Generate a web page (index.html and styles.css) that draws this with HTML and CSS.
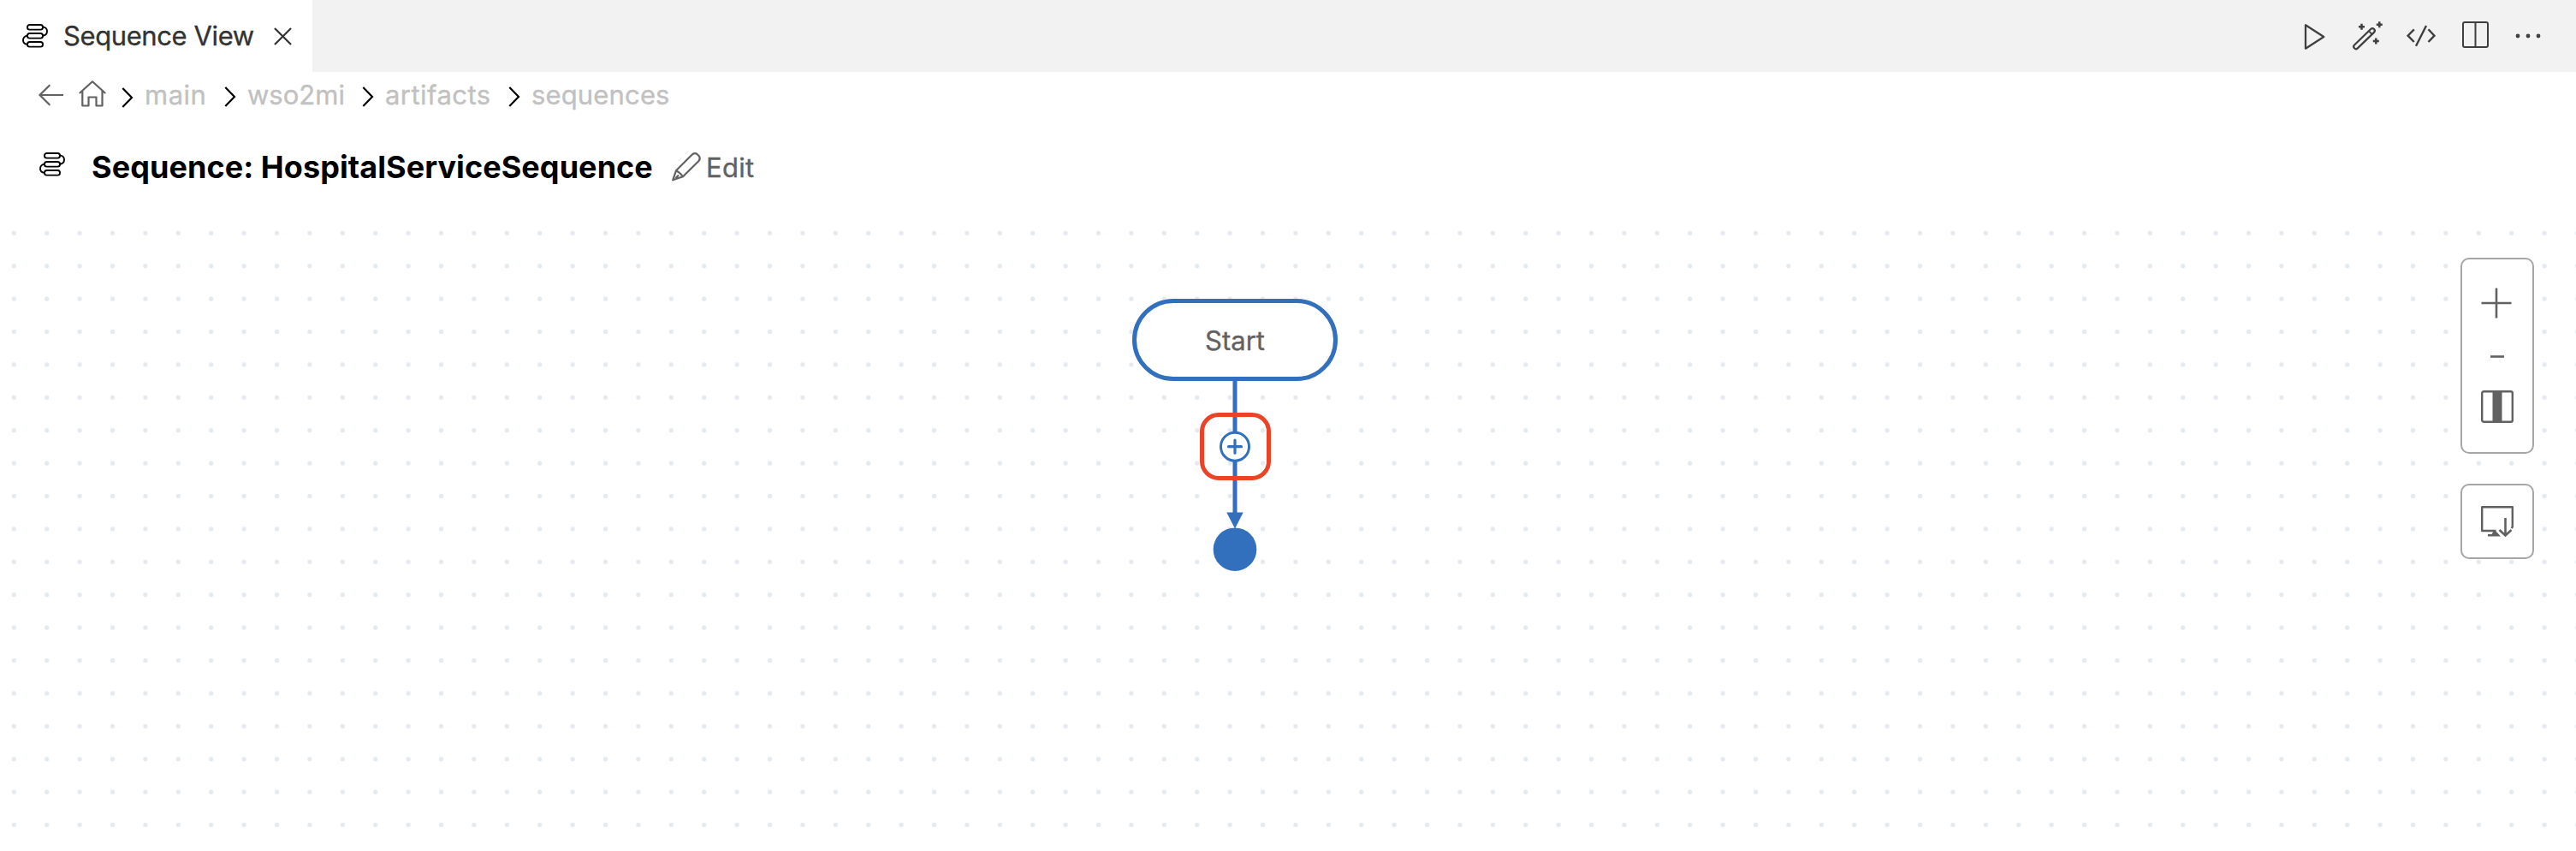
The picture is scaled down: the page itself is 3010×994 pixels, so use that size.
FILE: index.html
```html
<!DOCTYPE html>
<html lang="en">
<head>
<meta charset="utf-8">
<title>Sequence View</title>
<link rel="stylesheet" href="styles.css">
</head>
<body>
<svg class="defs" aria-hidden="true">
  <symbol id="sequence" viewBox="0 0 30 28">
    <g fill="none" stroke="currentColor" stroke-width="1.9">
      <rect x="6" y="1" width="18" height="5.600" rx="2.600"/>
      <rect x="6" y="11" width="18" height="5.600" rx="2.600"/>
      <rect x="6" y="21" width="18" height="5.600" rx="2.600"/>
      <path d="M24 3.400c3 .4 5 2.400 5 5.200s-2 4.900-5 5.200M6 13.600c-3 .6-5 2.700-5 5.400s2 4.600 5 4.900"/>
    </g>
  </symbol>
  <symbol id="chevron" viewBox="0 0 14 24">
    <path d="M1.300 1 12 12 1.300 23" fill="none" stroke="currentColor" stroke-width="2.200"/>
  </symbol>
</svg>

<header class="tabs">
  <div class="tab">
    <svg class="seq-icon"><use href="#sequence"/></svg>
    <span class="tab-label">Sequence View</span>
    <svg class="tab-close" viewBox="0 0 22 22"><path d="M1 1 21 21M21 1 1 21" fill="none" stroke="currentColor" stroke-width="2.300"/></svg>
  </div>
  <div class="actions">
    <svg class="act-run" viewBox="0 0 25 32"><path d="M2 2.300V29.700L23.300 16Z" fill="none" stroke="currentColor" stroke-width="2.300" stroke-linejoin="round"/></svg>
    <svg class="act-wand" viewBox="0 0 34 33"><g fill="none" stroke="currentColor">
      <rect x="-16" y="-2.700" width="32" height="5.400" rx="2.700" stroke-width="2.200" transform="translate(12.500 20.200) rotate(-44)"/>
      <path d="M18 11.300 21.700 15" stroke-width="1.800"/>
      <path d="M6 6.300h7M9.500 2.800v7M26.800 3.700h7M30.300.2v7M22.800 23h7M26.300 19.500v7" stroke-width="2.500"/></g></svg>
    <svg class="act-code" viewBox="0 0 34 26"><path d="M8.800 5.300 1.600 12.700 8.800 20M11 24.700 23 1M25.500 5.300 32.500 12.700 25.500 20" fill="none" stroke="currentColor" stroke-width="2.400"/></svg>
    <svg class="act-split" viewBox="0 0 31 31"><rect x="1" y="1" width="29" height="29" rx="2" fill="none" stroke="currentColor" stroke-width="2"/><path d="M15.500 1v29" stroke="currentColor" stroke-width="2"/></svg>
    <svg class="act-more" viewBox="0 0 30 6" fill="currentColor"><circle cx="3" cy="3" r="2.400"/><circle cx="15" cy="3" r="2.400"/><circle cx="27" cy="3" r="2.400"/></svg>
  </div>
</header>

<nav class="crumbs">
  <svg class="back" viewBox="0 0 29 26"><path d="M13.300 1.200 1.500 13 13.300 24.800M1.500 13H29" fill="none" stroke="currentColor" stroke-width="2.200"/></svg>
  <svg class="home" viewBox="0 0 32 31"><path d="M.8 15 16 1.300 31.200 15M4.300 12.300V29.500H11.500V19.500H20.500V29.500H27.500V12.300" fill="none" stroke="currentColor" stroke-width="2.200" stroke-linejoin="round"/></svg>
  <svg class="chev first"><use href="#chevron"/></svg><span class="crumb main">main</span>
  <svg class="chev"><use href="#chevron"/></svg><span class="crumb wso">wso2mi</span>
  <svg class="chev"><use href="#chevron"/></svg><span class="crumb art">artifacts</span>
  <svg class="chev"><use href="#chevron"/></svg><span class="crumb seq">sequences</span>
</nav>

<div class="title-row">
  <svg class="seq-icon"><use href="#sequence"/></svg>
  <h1 class="title">Sequence: HospitalServiceSequence</h1>
  <svg class="pencil" viewBox="0 0 34 34"><path d="M1.200 32.300 5 21.300 24 2.300Q27 .2 29.500 2L32 4.500Q33.700 7.500 31.500 10L13 28.300ZM5 21.300Q9 23 13 28.300M8 26.500 4.500 30" fill="none" stroke="currentColor" stroke-width="2.200" stroke-linejoin="round"/></svg>
  <span class="edit">Edit</span>
</div>

<main class="canvas">
  <svg class="dots">
    <defs><pattern id="grid" width="38.400" height="38.400" patternUnits="userSpaceOnUse" x="-2.900" y="13.100"><circle cx="19.200" cy="19.200" r="2.650" fill="#e4eaef"/></pattern></defs>
    <rect width="3010" height="754" fill="url(#grid)"/>
  </svg>
  <svg class="links" viewBox="1300 340 300 340">
    <path d="M1443 440V600" stroke="#326fbc" stroke-width="5"/>
    <path d="M1433.300 598.500h19.400L1443 617.500Z" fill="#326fbc"/>
    <circle cx="1443" cy="641.700" r="25.300" fill="#326fbc"/>
    <rect x="1404.500" y="484.500" width="78" height="74" rx="19.500" fill="none" stroke="#ec4226" stroke-width="5"/>
    <circle cx="1443" cy="521.700" r="16.500" fill="#fff" stroke="#326fbc" stroke-width="3"/>
    <path d="M1435.500 521.700h15M1443 514.200v15" stroke="#326fbc" stroke-width="3.200" stroke-linecap="round"/>
  </svg>
  <div class="start">Start</div>
  <div class="tools">
    <div class="panel zoom">
      <svg class="t-plus" viewBox="0 0 36 36"><path d="M.5 18h35M18 .5v35" stroke="currentColor" stroke-width="2.600"/></svg>
      <svg class="t-minus" viewBox="0 0 16 3"><path d="M0 1.500h16" stroke="currentColor" stroke-width="2.600"/></svg>
      <svg class="t-fit" viewBox="0 0 38 38"><rect x="1.200" y="1.200" width="35.600" height="35.600" rx="2" fill="none" stroke="currentColor" stroke-width="2.400"/><path d="M13.500 1h11v36h-11z" fill="currentColor"/></svg>
    </div>
    <div class="panel export">
      <svg class="t-export" viewBox="0 0 38 36"><path d="M17.500 29H1.200V1.200H36.800V24.500L35.500 26" fill="none" stroke="currentColor" stroke-width="2.400" stroke-linejoin="round"/><path d="M8 35.500V33h4.500l2-3.500H17.500L23 35.500Z" fill="currentColor"/><path d="M28.500 14V34M21.500 28l7 6.500 7-6.500" fill="none" stroke="currentColor" stroke-width="2.600"/></svg>
    </div>
  </div>
</main>
</body>
</html>
```
FILE: styles.css
```css
* { box-sizing: border-box; }
body {
  margin: 0;
  width: 3010px;
  height: 994px;
  overflow: hidden;
  background: #fff;
  color: #616161;
  font-family: Inter, "Noto Sans", sans-serif;
  font-size: 31px;
  line-height: 37px;
  white-space: nowrap;
}
svg { display: block; flex: none; overflow: visible; }
.defs { position: absolute; width: 0; height: 0; }
.seq-icon { width: 30px; height: 28px; color: #000; }
.tab-label, .crumb, .edit, .start { -webkit-text-stroke: 0.35px currentColor; }

/* Editor tab bar */
.tabs { display: flex; justify-content: space-between; height: 84px; background: #f2f2f2; }
.tab { display: flex; align-items: center; width: 365px; padding-left: 26px; background: #fff; color: #333; }
.tab-label { width: 229px; margin-left: 18px; padding-bottom: 1px; letter-spacing: -0.4px; }
.tab-close { width: 21px; height: 21px; margin-left: 17px; }
.actions { display: flex; align-items: center; padding-right: 41px; color: #3f3f3f; }
.act-run { width: 25px; height: 32px; margin-right: 33px; margin-top: 1px; }
.act-wand { width: 34px; height: 33px; margin-right: 28px; margin-bottom: 2px; }
.act-code { width: 34px; height: 26px; margin-right: 31px; }
.act-split { width: 31px; height: 31px; margin-right: 31px; margin-bottom: 3px; }
.act-more { width: 30px; height: 6px; }

/* Breadcrumbs */
.crumbs { display: flex; align-items: center; height: 53px; padding-left: 45px; }
.back { width: 29px; height: 26px; }
.home { width: 32px; height: 31px; margin: 0 0 3px 18px; }
.chev { width: 14px; height: 24px; margin-top: 5px; color: #000; }
.chev.first { margin: 6px 0 0 18px; }
.crumb { color: #c1c1c1; }
.main { width: 93px; padding-left: 13px; margin-right: 13px; letter-spacing: 0.5px; }
.wso { width: 147px; padding-left: 13px; }
.art { width: 157px; padding-left: 13px; letter-spacing: 0.45px; }
.seq { padding-left: 13px; letter-spacing: 0.15px; }

/* Title */
.title-row { display: flex; align-items: center; height: 103px; padding: 13px 0 0 46px; }
.title-row .seq-icon { margin-bottom: 6px; }
.title { width: 658px; margin: 0 0 0 31px; color: #000; font-size: 36px; font-weight: 700; line-height: 44px; letter-spacing: 0.07px; }
.pencil { width: 34px; height: 34px; margin-left: 20px; }
.edit { margin-left: 6px; letter-spacing: 0.3px; }

/* Diagram canvas */
.canvas { position: relative; height: 754px; }
.dots { width: 3010px; height: 754px; }
.links { position: absolute; left: 1300px; top: 100px; width: 300px; height: 340px; }
.start {
  position: absolute; left: 1323px; top: 109px;
  display: flex; align-items: center; justify-content: center;
  width: 240px; height: 96px;
  background: #fff; border: 5px solid #326fbc; border-radius: 48px;
}
.tools { position: absolute; left: 2875px; top: 61px; display: flex; flex-direction: column; gap: 35px; }
.panel {
  display: flex; flex-direction: column; align-items: center;
  width: 86px; padding-top: 24px;
  background: #fff; border: 2px solid #a6a6a6; border-radius: 10px;
}
.zoom { height: 229px; padding-top: 33px; }
.export { height: 88px; }
.t-plus { width: 36px; height: 36px; margin-right: 2px; }
.t-minus { width: 16px; height: 3px; margin-top: 43px; }
.t-fit { width: 38px; height: 38px; margin-top: 38px; }
.t-export { width: 38px; height: 36px; }
```
